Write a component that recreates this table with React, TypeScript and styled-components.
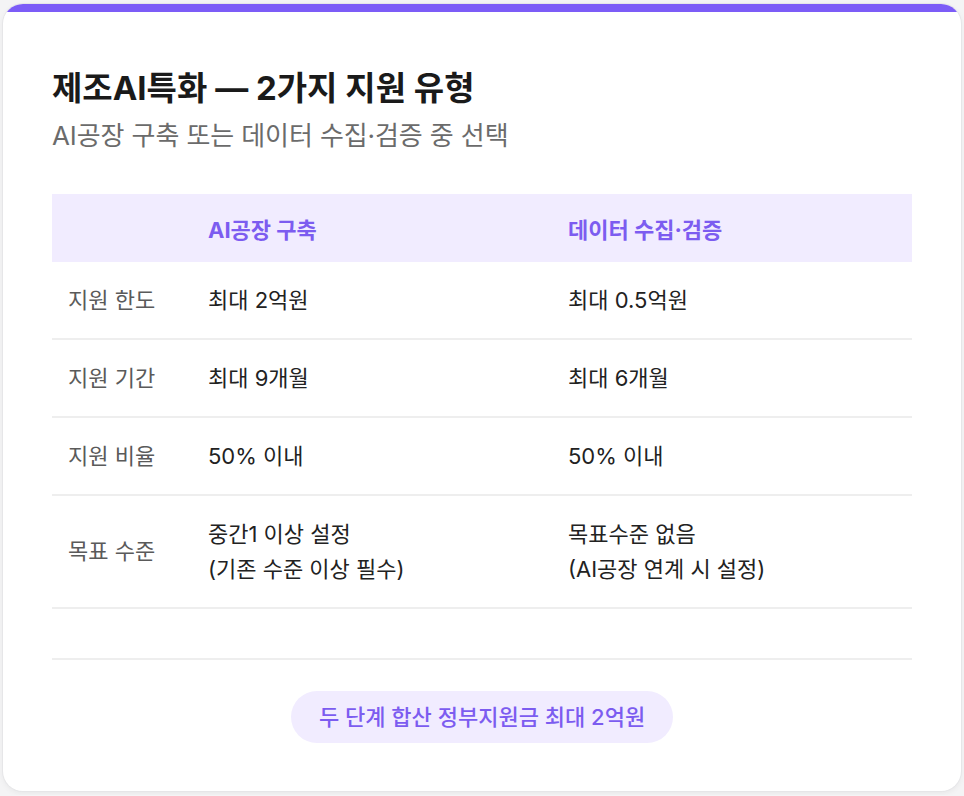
import React from 'react';
import styled, { createGlobalStyle } from 'styled-components';

const GlobalStyle = createGlobalStyle`
	html, body {
		margin: 0;
		padding: 0;
		background: #f4f4f5;
	}
	body {
		font-family: Inter, "Noto Sans CJK KR", sans-serif;
		color: #1f1f1f;
	}
`;

const Card = styled.div`
	margin: 4px 3px;
	background: #ffffff;
	border-radius: 20px;
	overflow: hidden;
	box-shadow: 0 0 0 1px #e6e6e8, 0 2px 6px rgba(0, 0, 0, 0.06);
`;

const TopBar = styled.div`
	height: 8px;
	background: #7c5cf7;
`;

const Body = styled.div`
	padding: 54px 49px 48px 49px;
`;

const Title = styled.h2`
	margin: 0;
	font-size: 33px;
	font-weight: 700;
	line-height: 44px;
	color: #1a1a1a;
`;

const Subtitle = styled.p`
	margin: 8px 0 0;
	font-size: 26px;
	line-height: 36px;
	color: #6b6b6b;
	letter-spacing: -0.1px;
`;

const Table = styled.table`
	width: 100%;
	margin-top: 40px;
	border-collapse: collapse;
	table-layout: fixed;
`;

const HeadRow = styled.tr`
	background: #f1ecff;
`;

const HeadCell = styled.th`
	height: 68px;
	padding: 0 16px;
	text-align: left;
	font-size: 22px;
	font-weight: 700;
	color: #7c5cf0;
`;

const Row = styled.tr`
	border-bottom: 2px solid #eeeeee;
`;

const Cell = styled.td<{ $label?: boolean }>`
	padding: 20.5px 16px;
	font-size: 22px;
	line-height: 35px;
	vertical-align: middle;
	color: ${p => (p.$label ? '#5a5a5a' : '#222222')};
`;

const Footer = styled.div`
	margin-top: 49px;
	border-top: 2px solid #eeeeee;
	padding-top: 31px;
	display: flex;
	justify-content: center;
`;

const Pill = styled.div`
	background: #f1ecff;
	color: #7c5cf0;
	font-size: 22px;
	font-weight: 500;
	line-height: 28px;
	padding: 12px 28px;
	border-radius: 26px;
`;

interface SupportRow {
	label: string;
	factory: string[];
	data: string[];
}

const rows: SupportRow[] = [
	{ label: '지원 한도', factory: ['최대 2억원'], data: ['최대 0.5억원'] },
	{ label: '지원 기간', factory: ['최대 9개월'], data: ['최대 6개월'] },
	{ label: '지원 비율', factory: ['50% 이내'], data: ['50% 이내'] },
	{
		label: '목표 수준',
		factory: ['중간1 이상 설정', '(기존 수준 이상 필수)'],
		data: ['목표수준 없음', '(AI공장 연계 시 설정)'],
	},
];

const Lines: React.FC<{ lines: string[] }> = ({ lines }) => (
	<>
		{lines.map((line, i) => (
			<div key={i}>{line}</div>
		))}
	</>
);

export default function App() {
	return (
		<>
			<GlobalStyle />
			<Card>
				<TopBar />
				<Body>
					<Title>제조AI특화 — 2가지 지원 유형</Title>
					<Subtitle>AI공장 구축 또는 데이터 수집·검증 중 선택</Subtitle>
					<Table>
						<colgroup>
							<col style={{ width: 140 }} />
							<col />
							<col />
						</colgroup>
						<thead>
							<HeadRow>
								<HeadCell />
								<HeadCell>AI공장 구축</HeadCell>
								<HeadCell>데이터 수집·검증</HeadCell>
							</HeadRow>
						</thead>
						<tbody>
							{rows.map(row => (
								<Row key={row.label}>
									<Cell $label>{row.label}</Cell>
									<Cell>
										<Lines lines={row.factory} />
									</Cell>
									<Cell>
										<Lines lines={row.data} />
									</Cell>
								</Row>
							))}
						</tbody>
					</Table>
					<Footer>
						<Pill>두 단계 합산 정부지원금 최대 2억원</Pill>
					</Footer>
				</Body>
			</Card>
		</>
	);
}
